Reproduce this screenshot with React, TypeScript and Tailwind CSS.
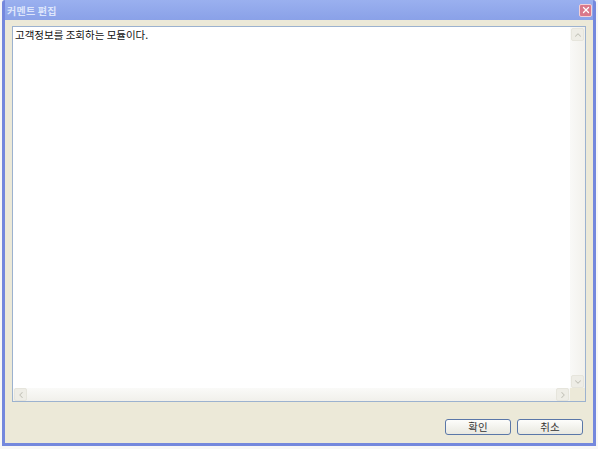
import { ChevronDown, ChevronLeft, ChevronRight, ChevronUp, X } from "lucide-react";

const font = { fontFamily: '"Noto Sans CJK KR", "Noto Sans", sans-serif' };

function ScrollButton({ children }: { children: React.ReactNode }) {
  return (
    <div className="flex h-[13px] w-[13px] items-center justify-center rounded-[2px] border border-[#e6e5dc] bg-[#eeede6] text-[#c2c1b8]">
      {children}
    </div>
  );
}

function DialogButton({ label }: { label: string }) {
  return (
    <button className="flex h-[16px] w-[66px] items-center justify-center rounded-[3px] border border-[#5a77a8] bg-gradient-to-b from-[#fdfdfb] to-[#e9e8e0] text-[10.5px] leading-none text-[#333]">
      {label}
    </button>
  );
}

export default function App() {
  return (
    <div className="h-[449px] w-[598px] bg-[#f7f7f7]" style={font}>
      <div className="ml-[2px] flex h-[446px] w-[594px] flex-col rounded-t-[3px] bg-[#7488dd] px-[3px] pb-[3px]">
        {/* title bar */}
        <div className="flex h-[20px] items-center justify-between bg-gradient-to-b from-[#9ab0ef] to-[#8aa1e8] pl-[2px] pr-[1px]">
          <span className="text-[10px] font-semibold tracking-wide text-[#dde5fb]">
            커멘트 편집
          </span>
          <div className="flex h-[13px] w-[13px] items-center justify-center rounded-[2px] border border-[#f3d0d6] bg-[#d9788a] text-white">
            <X size={10} strokeWidth={3} />
          </div>
        </div>

        {/* body */}
        <div className="flex flex-1 flex-col bg-[#ece9d8] px-[7px] pb-[8px] pt-[6px]">
          <div className="flex h-[376px] flex-col border border-[#9cb2cf] bg-white">
            <div className="flex flex-1">
              <div className="flex-1 pl-[2px] pt-[1px] text-[10.5px] leading-[14px] text-[#111]">
                고객정보를 조회하는 모듈이다.
              </div>
              <div className="flex w-[15px] flex-col items-center bg-gradient-to-r from-[#f9f9f7] to-[#f2f1ec] pt-[1px]">
                <ScrollButton>
                  <ChevronUp size={10} strokeWidth={2.5} />
                </ScrollButton>
                <div className="flex-1" />
                <ScrollButton>
                  <ChevronDown size={10} strokeWidth={2.5} />
                </ScrollButton>
              </div>
            </div>
            <div className="flex h-[13px]">
              <div className="flex flex-1 items-center justify-between bg-gradient-to-b from-[#fafaf8] to-[#f1f0eb] px-[1px]">
                <ScrollButton>
                  <ChevronLeft size={10} strokeWidth={2.5} />
                </ScrollButton>
                <ScrollButton>
                  <ChevronRight size={10} strokeWidth={2.5} />
                </ScrollButton>
              </div>
              <div className="w-[15px] bg-[#ece9d8]" />
            </div>
          </div>

          <div className="mt-[17px] flex justify-end gap-[6px] pr-[3px]">
            <DialogButton label="확인" />
            <DialogButton label="취소" />
          </div>
        </div>
      </div>
    </div>
  );
}
